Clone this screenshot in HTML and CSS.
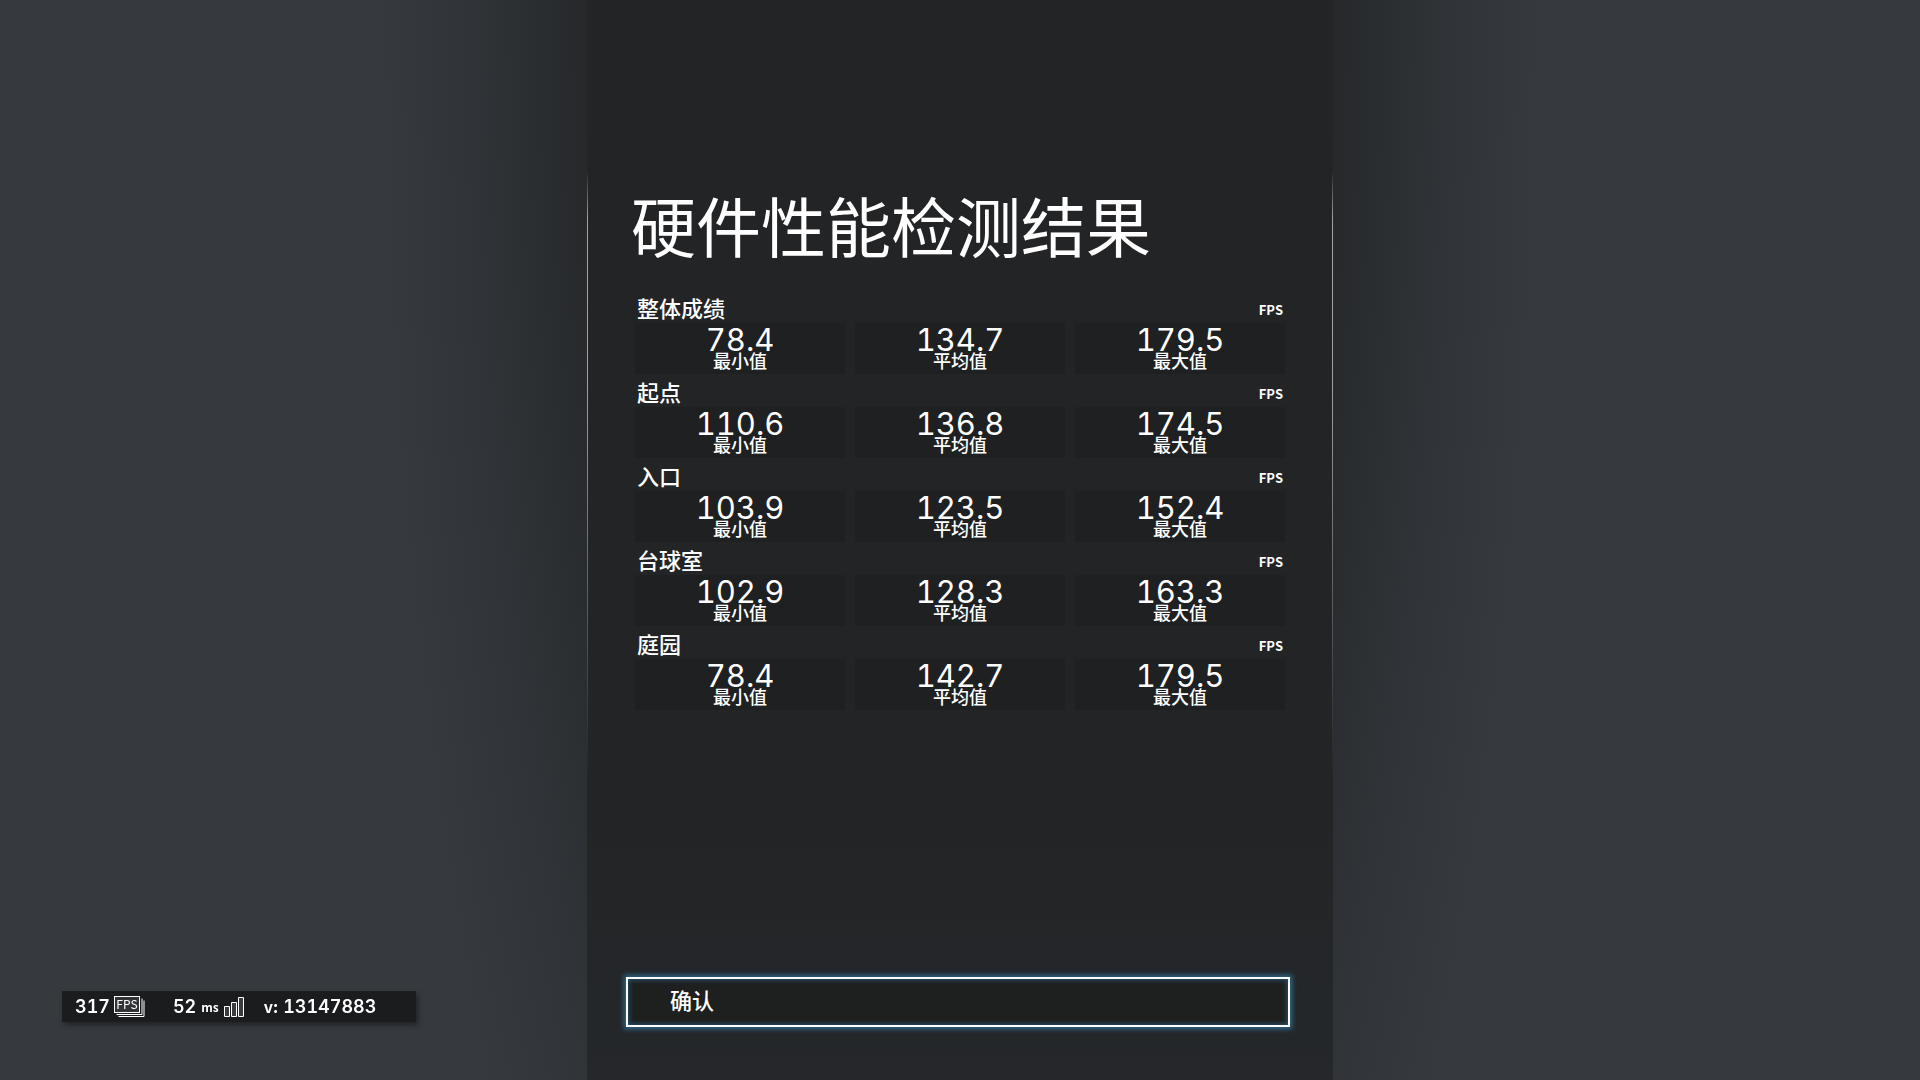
FILE: index.html
```html
<!DOCTYPE html>
<html lang="zh-CN">
<head>
    <meta charset="UTF-8">
    <meta name="viewport" content="width=device-width, initial-scale=1.0">
    <title>硬件性能检测结果</title>
    <link rel="stylesheet" href="styles.css">
</head>
<body>

    <!-- Results panel -->
    <main class="panel">
        <h1>硬件性能检测结果</h1>

        <section class="result">
            <div class="result-head"><h2>整体成绩</h2><span class="unit">FPS</span></div>
            <dl class="scores">
                <div class="score"><dt>最小值</dt><dd>78.4</dd></div>
                <div class="score"><dt>平均值</dt><dd>134.7</dd></div>
                <div class="score"><dt>最大值</dt><dd>179.5</dd></div>
            </dl>
        </section>

        <section class="result">
            <div class="result-head"><h2>起点</h2><span class="unit">FPS</span></div>
            <dl class="scores">
                <div class="score"><dt>最小值</dt><dd>110.6</dd></div>
                <div class="score"><dt>平均值</dt><dd>136.8</dd></div>
                <div class="score"><dt>最大值</dt><dd>174.5</dd></div>
            </dl>
        </section>

        <section class="result">
            <div class="result-head"><h2>入口</h2><span class="unit">FPS</span></div>
            <dl class="scores">
                <div class="score"><dt>最小值</dt><dd>103.9</dd></div>
                <div class="score"><dt>平均值</dt><dd>123.5</dd></div>
                <div class="score"><dt>最大值</dt><dd>152.4</dd></div>
            </dl>
        </section>

        <section class="result">
            <div class="result-head"><h2>台球室</h2><span class="unit">FPS</span></div>
            <dl class="scores">
                <div class="score"><dt>最小值</dt><dd>102.9</dd></div>
                <div class="score"><dt>平均值</dt><dd>128.3</dd></div>
                <div class="score"><dt>最大值</dt><dd>163.3</dd></div>
            </dl>
        </section>

        <section class="result">
            <div class="result-head"><h2>庭园</h2><span class="unit">FPS</span></div>
            <dl class="scores">
                <div class="score"><dt>最小值</dt><dd>78.4</dd></div>
                <div class="score"><dt>平均值</dt><dd>142.7</dd></div>
                <div class="score"><dt>最大值</dt><dd>179.5</dd></div>
            </dl>
        </section>

        <button class="confirm-btn" type="button">确认</button>
    </main>

    <!-- Network / build overlay -->
    <div class="status-bar">
        <div class="status-item fps">
            <span>317</span>
            <span class="fps-icon">
                <svg width="31" height="22" viewBox="0 0 31 22" fill="none" stroke="#fff" aria-hidden="true">
                    <rect x="0.5" y="0.5" width="25" height="16" fill="#333436"/>
                    <path d="M2.5 18.5h25.5V2.5M4.5 20.5h25.5V4.5"/>
                </svg>
                <span class="fps-text">FPS</span>
            </span>
        </div>
        <div class="status-item ping">
            <span>52</span>
            <span class="small">ms</span>
            <svg width="20" height="20" viewBox="0 0 20 20" fill="#3a3b3d" stroke="#fff" aria-hidden="true">
                <path d="M0.5 9.5h5v10h-5zM7.5 5.5h5v14h-5zM14.5 0.5h5v19h-5z"/>
            </svg>
        </div>
        <div class="status-item">
            <span class="ver">v:</span>
            <span>13147883</span>
        </div>
    </div>

</body>
</html>
```

FILE: styles.css
```css
* {
    box-sizing: border-box;
}

body {
    margin: 0;
    min-height: 100vh;
    display: flex;
    justify-content: center;
    background-color: #36393e;
    /* Soft shade around the panel, strongest at the top */
    background-image: radial-gradient(ellipse 580px 1900px at 50% 0, #26282a 64%, #2a2d30 72%, #303337 84%, #36393e 100%);
    color: #fff;
    font-family: "Noto Sans CJK SC", sans-serif;
    font-weight: 500;
    overflow: hidden;
}

/* Results panel */
.panel {
    position: relative;
    width: 746px;
    min-height: 100vh;
    padding: 176px 48px 53px;
    display: flex;
    flex-direction: column;
    background: linear-gradient(#232426 75%, #24272a 95%, #25272a);
}

/* Thin lines down both sides */
.panel::before,
.panel::after {
    content: "";
    position: absolute;
    top: 170px;
    bottom: 300px;
    width: 1px;
    background: linear-gradient(transparent, #a0a2a4 8%, #a0a2a4 35%, transparent);
}

.panel::before {
    left: 0;
}

.panel::after {
    right: 0;
}

h1 {
    margin: 0 0 18px -4px;
    font-size: 65px;
    font-weight: 400;
    line-height: 96px;
}

.result-head {
    height: 33px;
    padding: 0 2px;
    display: flex;
    justify-content: space-between;
}

h2 {
    margin: 0;
    font-size: 22px;
    font-weight: 500;
    line-height: 34px;
}

.unit {
    font-size: 13px;
    font-weight: 700;
    line-height: 40px;
}

.scores {
    margin: 0;
    display: grid;
    grid-template-columns: repeat(3, 1fr);
    gap: 10px;
}

/* Number above, label below */
.score {
    height: 51px;
    padding-top: 5px;
    display: flex;
    flex-direction: column-reverse;
    justify-content: flex-end;
    align-items: center;
    background-color: #1f2022;
}

.score dt {
    font-size: 18px;
    line-height: 16px;
}

.score dd {
    margin: 0;
    font-family: Inter, sans-serif;
    font-size: 31px;
    font-weight: 400;
    font-variant-numeric: tabular-nums;
    line-height: 24px;
}

.confirm-btn {
    height: 50px;
    margin: auto -5px 0 -9px;
    padding: 0 0 6px 42px;
    border: 2px solid #fff;
    background-color: #1e1f1f;
    color: #fff;
    font-family: inherit;
    font-size: 22px;
    font-weight: 500;
    text-align: left;
    cursor: pointer;
    box-shadow: 0 0 5px 2px #2f6c8f, inset 0 0 5px 1px #28566f;
}

/* Bottom left overlay */
.status-bar {
    position: fixed;
    left: 62px;
    bottom: 58px;
    width: 354px;
    height: 31px;
    padding: 0 13px;
    display: flex;
    align-items: center;
    background-color: #1b1c1e;
    box-shadow: 2px 3px 5px rgba(0, 0, 0, 0.4);
    font-family: Inter, sans-serif;
    font-size: 18px;
    font-weight: 600;
    font-variant-numeric: tabular-nums;
}

.status-item {
    display: flex;
    align-items: center;
    gap: 5px;
}

.fps {
    gap: 4px;
    margin-right: 28px;
}

.ping {
    margin-right: 20px;
}

.fps-icon {
    position: relative;
    height: 22px;
}

.fps-icon svg {
    display: block;
}

.fps-text {
    position: absolute;
    top: 0;
    left: 0;
    width: 26px;
    font-family: "Noto Sans CJK SC", sans-serif;
    font-size: 12px;
    font-weight: 400;
    line-height: 16px;
    text-align: center;
}

.small,
.ver {
    font-family: "Noto Sans CJK SC", sans-serif;
    font-weight: 700;
    line-height: 20px;
}

.small {
    font-size: 12px;
}

.ver {
    font-size: 16px;
    padding-bottom: 2px;
}
```
